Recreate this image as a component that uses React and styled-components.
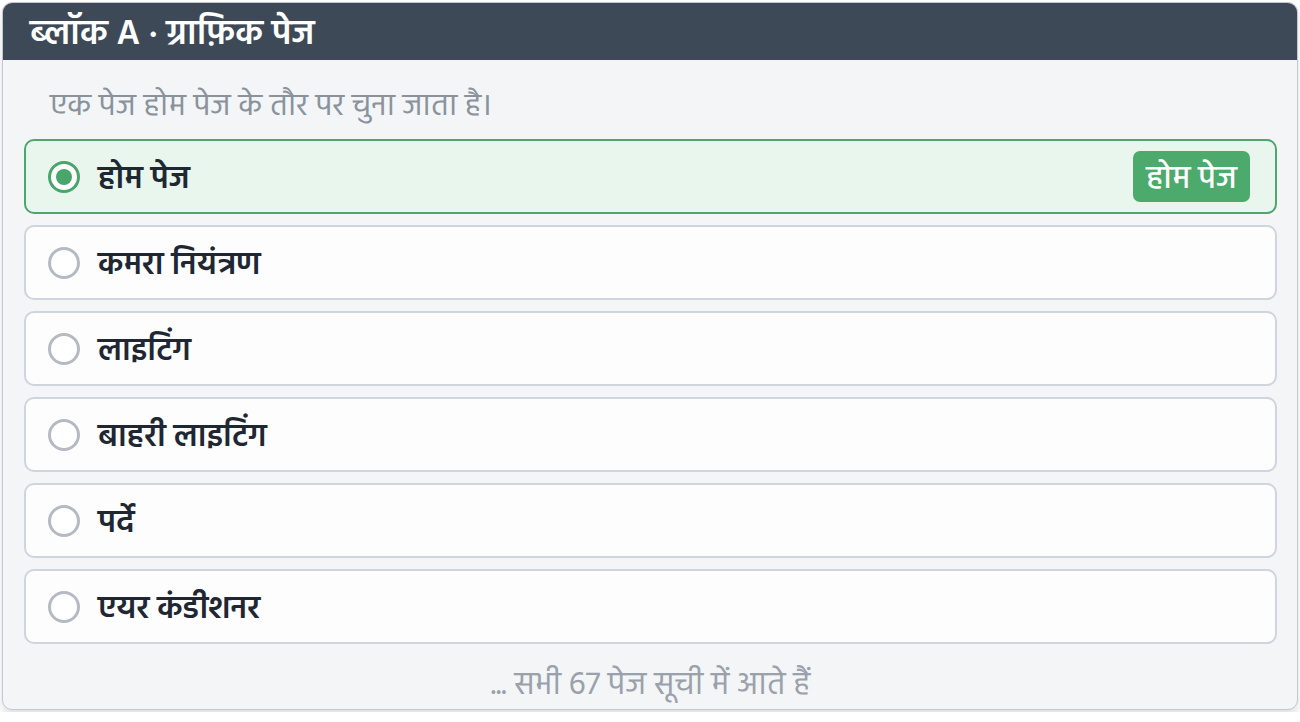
import React from "react";
import styled, { createGlobalStyle } from "styled-components";

const Global = createGlobalStyle`
  html, body { margin: 0; padding: 0; background: #ffffff; }
  body { font-family: "Hind", "Noto Sans Devanagari", "Noto Sans", sans-serif; }
  * { box-sizing: border-box; }
`;

const Card = styled.section`
  margin: 2px;
  width: 1296px;
  border: 1px solid #c3c8cf;
  border-radius: 10px;
  background: #f3f5f7;
  overflow: hidden;
  box-shadow: 0 6px 10px rgba(0, 0, 0, 0.12);
`;

const Header = styled.header`
  height: 57px;
  background: #3d4957;
  display: flex;
  align-items: center;
  padding: 6px 0 0 27px;
  color: #ffffff;
  font-size: 35px;
  line-height: 40px;
  font-weight: 600;
`;

const Body = styled.div`
  display: flex;
  flex-direction: column;
  gap: 11px;
  padding: 0 20px 5px 21px;
`;

const Description = styled.p`
  margin: 29px 0 3px 26px;
  font-size: 31px;
  line-height: 36px;
  color: #8a929c;
  font-weight: 400;
`;

const Row = styled.div`
  height: 75px;
  display: flex;
  align-items: center;
  gap: 18px;
  padding: 0 25px 0 22px;
  border: 2px solid ${(p) => (p.$selected ? "#4fa56d" : "#cfd5dd")};
  border-radius: 10px;
  background: ${(p) => (p.$selected ? "#e8f6ed" : "#fdfdfe")};
`;

const Radio = styled.span`
  flex: none;
  width: 32px;
  height: 32px;
  border-radius: 50%;
  border: 3px solid ${(p) => (p.$selected ? "#4aa56b" : "#b5bac2")};
  background: #ffffff;
  display: flex;
  align-items: center;
  justify-content: center;
  &::after {
    content: "";
    display: ${(p) => (p.$selected ? "block" : "none")};
    width: 16px;
    height: 16px;
    border-radius: 50%;
    background: #4aa56b;
  }
`;

const Label = styled.span`
  flex: 1;
  padding-top: 6px;
  font-size: 32px;
  line-height: 40px;
  font-weight: 600;
  color: #1f2733;
`;

const Badge = styled.span`
  flex: none;
  height: 51px;
  padding: 6px 13px 0;
  display: flex;
  align-items: center;
  border-radius: 7px;
  background: #4caa6d;
  color: #ffffff;
  font-size: 32px;
  line-height: 40px;
  font-weight: 500;
`;

const Footer = styled.div`
  margin-top: 13px;
  text-align: center;
  font-size: 32px;
  line-height: 36px;
  color: #9aa1ab;
`;

const pages = [
  "होम पेज",
  "कमरा नियंत्रण",
  "लाइटिंग",
  "बाहरी लाइटिंग",
  "पर्दे",
  "एयर कंडीशनर",
];

export default function App() {
  return (
    <>
      <Global />
      <Card>
        <Header>ब्लॉक A · ग्राफ़िक पेज</Header>
        <Body>
          <Description>एक पेज होम पेज के तौर पर चुना जाता है।</Description>
          {pages.map((p, i) => (
            <Row key={p} $selected={i === 0}>
              <Radio $selected={i === 0} />
              <Label>{p}</Label>
              {i === 0 && <Badge>होम पेज</Badge>}
            </Row>
          ))}
          <Footer>... सभी 67 पेज सूची में आते हैं</Footer>
        </Body>
      </Card>
    </>
  );
}
